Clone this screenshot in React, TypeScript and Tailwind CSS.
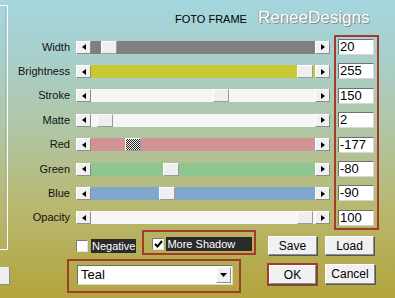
import React from 'react'

const rows = [
  { label: 'Width', value: '20', track: 'bg-[#7f7f7f]', thumb: 'ml-[10px]' },
  { label: 'Brightness', value: '255', track: 'bg-[#c9c831]', thumb: 'ml-[206px]' },
  { label: 'Stroke', value: '150', track: 'bg-[#f6f6f6]', thumb: 'ml-[122px]' },
  { label: 'Matte', value: '2', track: 'bg-[#f6f6f6]', thumb: 'ml-[6px]' },
  { label: 'Red', value: '-177', track: 'bg-[#d09494]', thumb: 'ml-[34px]', focus: true },
  { label: 'Green', value: '-80', track: 'bg-[#8fc68f]', thumb: 'ml-[72px]' },
  { label: 'Blue', value: '-90', track: 'bg-[#80a8cf]', thumb: 'ml-[68px]' },
  { label: 'Opacity', value: '100', track: 'bg-[#f6f6f6]', thumb: 'ml-[206px]' },
]

const raised =
  'border border-t-white border-l-white border-r-[#8c8c8c] border-b-[#8c8c8c] bg-[#f1f1f1]'

const ArrowBtn = ({ dir }: { dir: 'left' | 'right' }) => (
  <div className={`w-[15px] h-[13px] shrink-0 flex items-center justify-center ${raised}`}>
    <svg width="4" height="6" viewBox="0 0 4 6">
      {dir === 'left' ? <polygon points="4,0 4,6 0,3" fill="#000" /> : <polygon points="0,0 0,6 4,3" fill="#000" />}
    </svg>
  </div>
)

const Button = ({ children, className = '' }: { children: React.ReactNode; className?: string }) => (
  <div
    className={`flex items-center justify-center text-[12px] text-black shadow-[1px_1px_0_#555] ${raised} ${className}`}
  >
    {children}
  </div>
)

const Checkbox = ({ checked }: { checked?: boolean }) => (
  <div className="w-[12px] h-[12px] shrink-0 bg-white border border-t-[#7a7a7a] border-l-[#7a7a7a] border-r-[#e0e0e0] border-b-[#e0e0e0] flex items-center justify-center">
    {checked && (
      <svg width="9" height="8" viewBox="0 0 9 8">
        <polyline points="1,4 3.5,6.5 8,1" fill="none" stroke="#000" strokeWidth="2" />
      </svg>
    )}
  </div>
)

export default function App() {
  return (
    <div
      className="w-[395px] h-[298px] overflow-hidden flex bg-[linear-gradient(180deg,#a5d6df_0%,#a8cfc9_20%,#b1c5a2_45%,#b8b86f_70%,#b3a43d_100%)] text-black"
      style={{ fontFamily: '"Liberation Sans", Arial, sans-serif' }}
    >
      {/* left edge of the neighbouring panel */}
      <div className="w-[10px] shrink-0 flex flex-col">
        <div className="mt-[5px] h-[245px] w-[8px] border-t border-r border-b border-white">
          <div className="h-full w-[6px] border-r border-dotted border-[#9aa]" />
        </div>
        <div className="mt-[17px] h-[18px] w-[10px] bg-[#eeeeee] border-r border-b border-[#8c8c8c]" />
      </div>

      <div className="flex-1 flex flex-col">
        {/* header */}
        <div className="h-[35px] flex items-start">
          <span className="ml-[165px] mt-[13px] text-[11px] leading-[13px]">FOTO FRAME</span>
          <span className="ml-[11px] mt-[8px] text-[17px] leading-[20px] text-white [text-shadow:1px_1px_0_#7d8c8c,-1px_0_0_#9fb0b0]">
            ReneeDesigns
          </span>
        </div>

        {/* sliders + values */}
        <div className="flex">
          <div className="w-[324px] flex flex-col">
            {rows.map((r) => (
              <div key={r.label} className="h-[24.4px] flex items-center">
                <span className="w-[60px] text-right text-[11px] leading-[13px] text-[#111]">{r.label}</span>
                <div className="ml-[6px] flex">
                  <ArrowBtn dir="left" />
                  <div className={`w-[224px] h-[13px] flex ${r.track}`}>
                    <div
                      className={`${r.thumb} w-[16px] h-[13px] shrink-0 border border-t-white border-l-white border-r-[#9a9a9a] border-b-[#9a9a9a] ${
                        r.focus
                          ? 'bg-[repeating-conic-gradient(#222_0_25%,#f4f4f4_0_50%)] bg-[length:2px_2px]'
                          : 'bg-[#efefef]'
                      }`}
                    />
                  </div>
                  <ArrowBtn dir="right" />
                </div>
              </div>
            ))}
          </div>

          <div className="w-[45px] border-2 border-[#a33a2b] pt-[2px] pl-[2px] flex flex-col gap-[8.4px]">
            {rows.map((r) => (
              <div
                key={r.label}
                className="w-[36px] h-[16px] bg-white border border-t-[#707070] border-l-[#707070] border-r-[#d8d8d8] border-b-[#d8d8d8] text-[13px] leading-[14px] pl-[1px]"
              >
                {r.value}
              </div>
            ))}
          </div>
        </div>

        {/* bottom controls */}
        <div className="flex">
          <div className="w-[252px] flex flex-col">
            <div className="h-[25px] flex items-start">
              <div className="ml-[66px] mt-[9px] flex items-center">
                <Checkbox />
                <span className="ml-[3px] h-[14px] px-[1px] bg-[#2a2a2a] text-white text-[11px] leading-[14px]">Negative</span>
              </div>
              <div className="ml-[6px] w-[114px] h-[25px] border-2 border-[#a33a2b] flex items-start pl-[8px] pt-[5px]">
                <div className="flex items-center">
                  <Checkbox checked />
                  <span className="ml-[2px] h-[14px] w-[86px] pl-[1px] bg-[#2a2a2a] text-white text-[11px] leading-[14px]">
                    More Shadow
                  </span>
                </div>
              </div>
            </div>
            <div className="ml-[57px] mt-[4px] w-[174px] h-[34px] border-2 border-[#a33a2b] pl-[8px] pt-[4px]">
              <div className="w-[156px] h-[20px] bg-white border border-t-[#707070] border-l-[#707070] border-r-[#d8d8d8] border-b-[#d8d8d8] flex items-center justify-between pl-[3px] pr-[1px]">
                <span className="text-[13px] leading-[16px]">Teal</span>
                <div className={`w-[15px] h-[16px] flex items-center justify-center ${raised}`}>
                  <svg width="7" height="4" viewBox="0 0 7 4">
                    <polygon points="0,0 7,0 3.5,4" fill="#000" />
                  </svg>
                </div>
              </div>
            </div>
          </div>

          <div className="pl-[5px] flex flex-col">
            <div className="mt-[6px] flex gap-[8px]">
              <Button className="ml-[1px] w-[49px] h-[19px]">Save</Button>
              <Button className="w-[49px] h-[19px]">Load</Button>
            </div>
            <div className="mt-[8px] flex items-start gap-[7px]">
              <div className="w-[51px] h-[23px] border-2 border-[#a33a2b]">
                <Button className="w-full h-full">OK</Button>
              </div>
              <Button className="mt-[1px] w-[50px] h-[20px]">Cancel</Button>
            </div>
          </div>
        </div>
      </div>
    </div>
  )
}
